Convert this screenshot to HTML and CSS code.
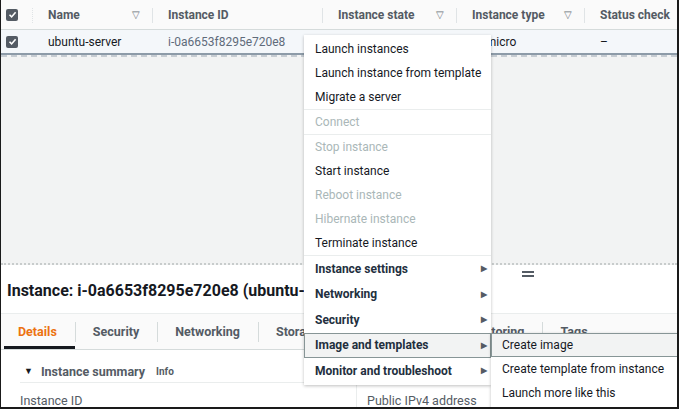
FILE: index.html
```html
<!DOCTYPE html>
<html>
<head>
<meta charset="utf-8">
<link rel="stylesheet" href="styles.css">
</head>
<body>
<div class="frame">
  <div class="table">
    <div class="thead">
      <div class="cell chk"><span class="checkbox"><svg viewBox="0 0 11 11" width="11" height="11"><path d="M2.5 5.8 L4.6 7.9 L8.6 3.2" fill="none" stroke="#fff" stroke-width="1.6"/></svg></span></div>
      <div class="cell col-name"><span>Name</span><span class="sort">▽</span></div>
      <div class="cell col-id"><span>Instance ID</span></div>
      <div class="cell col-state"><span>Instance state</span><span class="sort">▽</span></div>
      <div class="cell col-type"><span>Instance type</span><span class="sort">▽</span></div>
      <div class="cell col-status nosep"><span>Status check</span></div>
    </div>
    <div class="trow">
      <div class="cell chk"><span class="checkbox"><svg viewBox="0 0 11 11" width="11" height="11"><path d="M2.5 5.8 L4.6 7.9 L8.6 3.2" fill="none" stroke="#fff" stroke-width="1.6"/></svg></span></div>
      <div class="cell col-name">ubuntu-server</div>
      <div class="cell col-id link">i-0a6653f8295e720e8</div>
      <div class="cell col-state">Running</div>
      <div class="cell col-type">t2.micro</div>
      <div class="cell col-status">–</div>
    </div>
  </div>
  <div class="empty"></div>
  <div class="details">
    <div class="handle"><span></span><span></span></div>
    <h1 class="title">Instance: i-0a6653f8295e720e8 (ubuntu-server)</h1>
    <div class="tabs">
      <div class="tab active">Details</div>
      <div class="tab">Security</div>
      <div class="tab">Networking</div>
      <div class="tab">Storage</div>
      <div class="tab narrow">Status checks</div>
      <div class="tab">Monitoring</div>
      <div class="tab">Tags</div>
    </div>
    <div class="summary">
      <div class="summary-head"><span class="caret">▼</span><span class="sum-title">Instance summary</span><span class="info">Info</span></div>
      <div class="summary-grid">
        <div class="field">Instance ID</div>
        <div class="field sep">Public IPv4 address</div>
      </div>
    </div>
  </div>

  <div class="menu">
    <div class="group">
      <div class="item">Launch instances</div>
      <div class="item">Launch instance from template</div>
      <div class="item">Migrate a server</div>
    </div>
    <div class="group">
      <div class="item disabled">Connect</div>
    </div>
    <div class="group">
      <div class="item disabled">Stop instance</div>
      <div class="item">Start instance</div>
      <div class="item disabled">Reboot instance</div>
      <div class="item disabled">Hibernate instance</div>
      <div class="item">Terminate instance</div>
    </div>
    <div class="group">
      <div class="item sub">Instance settings<span class="arrow">▶</span></div>
      <div class="item sub">Networking<span class="arrow">▶</span></div>
      <div class="item sub">Security<span class="arrow">▶</span></div>
      <div class="item sub hl">Image and templates<span class="arrow">▶</span></div>
      <div class="item sub">Monitor and troubleshoot<span class="arrow">▶</span></div>
    </div>
  </div>
  <div class="submenu">
    <div class="item hl">Create image</div>
    <div class="item">Create template from instance</div>
    <div class="item">Launch more like this</div>
  </div>
</div>
</body>
</html>
```
FILE: styles.css
```css
* { box-sizing: border-box; }
html, body { margin: 0; padding: 0; }
body {
  width: 679px;
  height: 409px;
  overflow: hidden;
  font-family: Roboto, "Liberation Sans", sans-serif;
  font-size: 12px;
  color: #16191f;
  background: #fff;
}
.frame {
  position: relative;
  width: 679px;
  height: 409px;
  overflow: hidden;
  border-left: 1px solid #1a1a1a;
  border-right: 2px solid #1a1a1a;
  border-bottom: 2px solid #1a1a1a;
  display: flex;
  flex-direction: column;
}
.table { flex: none; }
.thead, .trow {
  display: grid;
  grid-template-columns: 32px 120px 170px 134px 128px 1fr;
}
.thead {
  height: 30px;
  background: #fafafa;
  border-bottom: 1px solid #d5dbdb;
  font-weight: 700;
  color: #545b64;
}
.trow {
  height: 25px;
  background: #f4f7fa;
  border-bottom: 2px solid #8d9ba8;
}
.cell {
  display: flex;
  align-items: center;
  padding-left: 15px;
  position: relative;
  white-space: nowrap;
}
.thead .cell { justify-content: space-between; padding-right: 13px; }
.thead .cell::after {
  content: "";
  position: absolute;
  right: 0;
  top: 8px;
  height: 15px;
  border-right: 1px solid #e0e4e6;
}
.thead .cell.nosep::after { display: none; }
.thead .chk::after { border-right-style: dotted; }
.chk { padding-left: 5px; }
.trow .chk { padding-left: 5px; }
.checkbox {
  display: inline-flex;
  width: 12px;
  height: 12px;
  background: #545b64;
  border-radius: 2px;
  align-items: center;
  justify-content: center;
}
.sort { font-size: 10px; color: #687078; font-weight: 400; }
.link { color: #5f6b7a; }
.empty {
  flex: none;
  height: 210px;
  background: #f2f3f3;
  border-top: 2px dashed #c6ccd2;
  border-bottom: 2px dotted #c8cccc;
}
.details { flex: 1; position: relative; background: #fff; }
.handle {
  position: absolute;
  left: 521px;
  top: 6px;
  display: flex;
  flex-direction: column;
  gap: 2px;
}
.handle span { width: 12px; height: 2px; background: #545b64; }
.title {
  margin: 0;
  padding: 16px 0 0 6px;
  height: 48px;
  font-size: 16px;
  font-weight: 700;
  color: #16191f;
  white-space: nowrap;
}
.tabs {
  display: flex;
  height: 37px;
  background: #fafafa;
  border-top: 1px solid #eaeded;
  border-bottom: 1px solid #d5dbdb;
  padding-left: 3px;
  align-items: stretch;
}
.tab {
  display: flex;
  align-items: center;
  padding: 0 18px;
  font-size: 12.5px;
  font-weight: 700;
  color: #545b64;
  position: relative;
  white-space: nowrap;
}
.tab.active { padding-left: 14px; }
.tab.narrow { padding: 0 14px; }
.tab + .tab::before {
  content: "";
  position: absolute;
  left: 0;
  top: 8px;
  height: 20px;
  border-left: 1px solid #d5dbdb;
}
.tab.active { color: #ec7211; }
.tab.active::after {
  content: "";
  position: absolute;
  left: 0;
  right: 0;
  bottom: 0;
  height: 3px;
  background: #16191f;
}
.summary { padding: 0 0 0 19px; }
.summary-head {
  display: flex;
  align-items: center;
  height: 33px;
  padding-top: 10px;
  border-bottom: 1px solid #eaeded;
  width: 336px;
  font-weight: 700;
  color: #545b64;
}
.caret { font-size: 9px; margin: 0 8px 0 4px; color: #16191f; }
.sum-title { font-size: 12.5px; color: #545b64; }
.info { font-size: 10px; margin-left: 11px; color: #545b64; }
.summary-grid {
  display: grid;
  grid-template-columns: 336px 1fr;
}
.field {
  padding-top: 10px;
  color: #545b64;
  font-size: 12.5px;
}
.field.sep { border-left: 1px solid #eaeded; padding-left: 10px; }

.menu {
  position: absolute;
  left: 303px;
  top: 35px;
  width: 187px;
  background: #fff;
  box-shadow: 0 1px 3px rgba(0,0,0,0.25);
  padding: 2px 0 0;
}
.group { border-bottom: 1px solid #eaeded; }
.group:last-child { border-bottom: none; padding-bottom: 1px; }
.item {
  height: 24px;
  display: flex;
  align-items: center;
  padding-left: 10px;
  padding-right: 3px;
  color: #16191f;
  white-space: nowrap;
  border: 1px solid transparent;
}
.item.disabled { color: #aab7b8; }
.item.sub {
  height: 25.5px;
  font-weight: 700;
  justify-content: space-between;
  color: #232f3e;
}
.arrow { font-size: 8px; color: #545b64; }
.item.hl { background: #f2f3f3; border-color: #879596; }
.submenu {
  position: absolute;
  left: 490px;
  top: 333px;
  width: 187px;
  height: 90px;
  background: #fff;
  box-shadow: 0 1px 3px rgba(0,0,0,0.25);
}
.submenu .item { height: 24px; }
```
